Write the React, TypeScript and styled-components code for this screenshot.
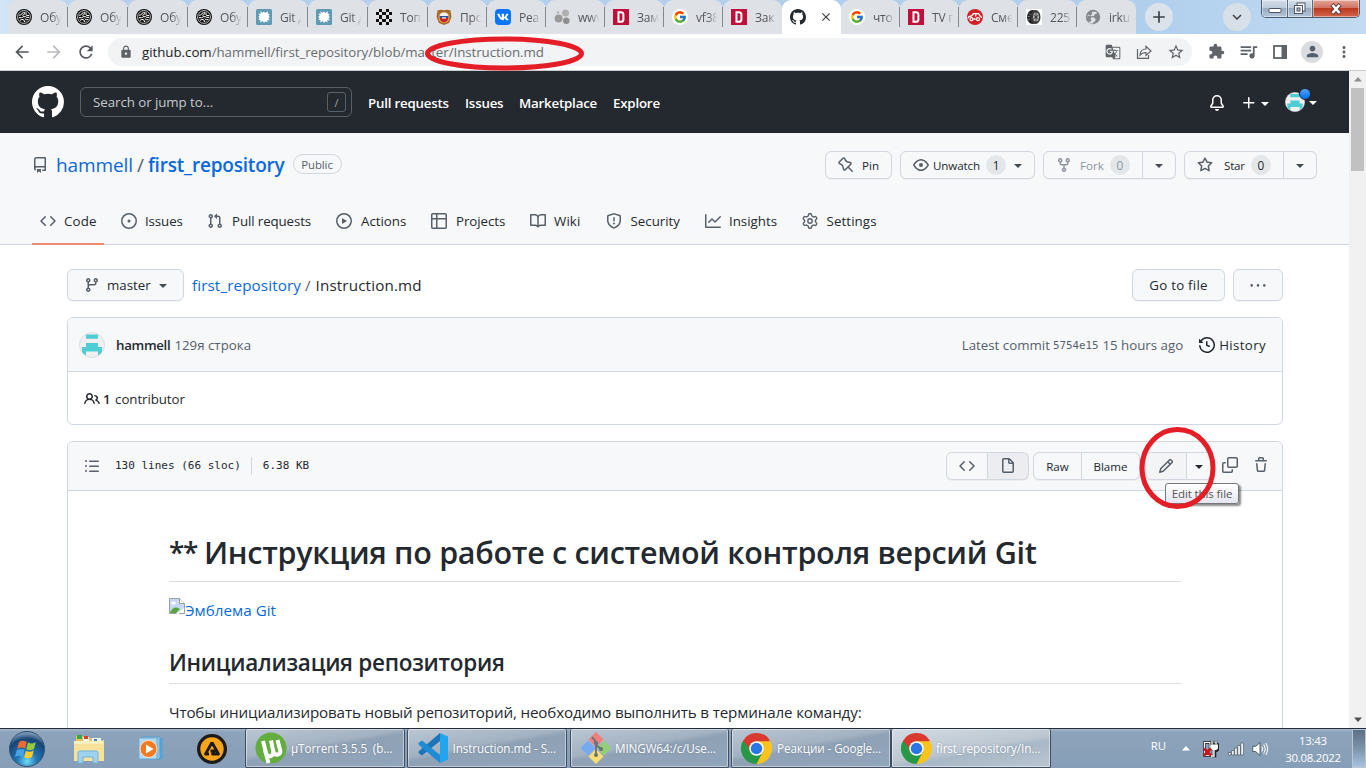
import React from "react";
import styled, { createGlobalStyle, css } from "styled-components";
import { FcGoogle } from "react-icons/fc";
import { FaVk } from "react-icons/fa";
import {
  MdArrowBack,
  MdArrowForward,
  MdRefresh,
  MdLock,
  MdStarBorder,
  MdExtension,
  MdQueueMusic,
  MdPerson,
  MdMoreVert,
  MdClose,
  MdAdd,
  MdExpandMore,
  MdGTranslate,
} from "react-icons/md";

const ui = `"Open Sans", "Noto Sans", sans-serif`;
const mono = `"DejaVu Sans Mono", monospace`;
const line = "#d0d7de";

const Global = createGlobalStyle`
  * { box-sizing: border-box; }
  body { margin: 0; overflow: hidden; font-family: ${ui}; background: #fff; }
  svg { display: block; flex: none; }
`;

/* ---------- shared ---------- */

const Screen = styled.div`
  position: relative;
  width: 1366px;
  height: 768px;
  display: flex;
  flex-direction: column;
  overflow: hidden;
  color: #24292f;
`;

type TextProps = {
  $size?: number;
  $weight?: number;
  $color?: string;
  $ls?: number;
  $mono?: boolean;
  $ml?: number;
  $drop?: number;
};
const Text = styled.span<TextProps>`
  white-space: pre;
  font-family: ${(p) => (p.$mono ? mono : ui)};
  font-size: ${(p) => p.$size ?? 13.3}px;
  font-weight: ${(p) => p.$weight ?? 400};
  color: ${(p) => p.$color ?? "#24292f"};
  letter-spacing: ${(p) => p.$ls ?? 0}px;
  margin-left: ${(p) => p.$ml ?? 0}px;
  margin-top: ${(p) => p.$drop ?? 0}px;
`;

const paths = {
  github:
    "M8 0C3.58 0 0 3.58 0 8c0 3.54 2.29 6.53 5.47 7.59.4.07.55-.17.55-.38 0-.19-.01-.82-.01-1.49-2.01.37-2.53-.49-2.69-.94-.09-.23-.48-.94-.82-1.13-.28-.15-.68-.52-.01-.53.63-.01 1.08.58 1.23.82.72 1.21 1.87.87 2.33.66.07-.52.28-.87.51-1.07-1.78-.2-3.64-.89-3.64-3.95 0-.87.31-1.59.82-2.15-.08-.2-.36-1.02.08-2.12 0 0 .67-.21 2.2.82.64-.18 1.32-.27 2-.27.68 0 1.36.09 2 .27 1.53-1.04 2.2-.82 2.2-.82.44 1.1.16 1.92.08 2.12.51.56.82 1.27.82 2.15 0 3.07-1.87 3.75-3.65 3.95.29.25.54.73.54 1.48 0 1.07-.01 1.93-.01 2.2 0 .21.15.46.55.38A8.013 8.013 0 0016 8c0-4.42-3.58-8-8-8z",
  repo: "M2 2.5A2.5 2.5 0 014.5 0h8.75a.75.75 0 01.75.75v12.5a.75.75 0 01-.75.75h-2.5a.75.75 0 110-1.5h1.75v-2h-8a1 1 0 00-.714 1.7.75.75 0 01-1.072 1.05A2.495 2.495 0 012 11.5v-9zm10.5-1V9h-8c-.356 0-.694.074-1 .208V2.5a1 1 0 011-1h8zM5 12.25v3.25a.25.25 0 00.4.2l1.45-1.087a.25.25 0 01.3 0L8.6 15.7a.25.25 0 00.4-.2v-3.25a.25.25 0 00-.25-.25h-3.5a.25.25 0 00-.25.25z",
  code: "M4.72 3.22a.75.75 0 011.06 1.06L2.06 8l3.72 3.72a.75.75 0 11-1.06 1.06L.47 8.53a.75.75 0 010-1.06l4.25-4.25zm6.56 0a.75.75 0 10-1.06 1.06L13.94 8l-3.72 3.72a.75.75 0 101.06 1.06l4.25-4.25a.75.75 0 000-1.06l-4.25-4.25z",
  issue:
    "M8 9.5a1.5 1.5 0 100-3 1.5 1.5 0 000 3zM8 0a8 8 0 100 16A8 8 0 008 0zM1.5 8a6.5 6.5 0 1113 0 6.5 6.5 0 01-13 0z",
  pull: "M7.177 3.073L9.573.677A.25.25 0 0110 .854v4.792a.25.25 0 01-.427.177L7.177 3.427a.25.25 0 010-.354zM3.75 2.5a.75.75 0 100 1.5.75.75 0 000-1.5zm-2.25.75a2.25 2.25 0 113 2.122v5.256a2.251 2.251 0 11-1.5 0V5.372A2.25 2.25 0 011.5 3.25zM11 2.5h-1V4h1a1 1 0 011 1v5.628a2.251 2.251 0 101.5 0V5A2.5 2.5 0 0011 2.5zm1 10.25a.75.75 0 111.5 0 .75.75 0 01-1.5 0zM3.75 12a.75.75 0 100 1.5.75.75 0 000-1.5z",
  play: "M1.5 8a6.5 6.5 0 1113 0 6.5 6.5 0 01-13 0zM8 0a8 8 0 100 16A8 8 0 008 0zM6.379 5.227A.25.25 0 006 5.442v5.117a.25.25 0 00.379.214l4.264-2.559a.25.25 0 000-.428L6.379 5.227z",
  table:
    "M0 1.75C0 .784.784 0 1.75 0h12.5C15.216 0 16 .784 16 1.75v12.5A1.75 1.75 0 0114.25 16H1.75A1.75 1.75 0 010 14.25V1.75zM1.5 6.5v7.75c0 .138.112.25.25.25H5v-8H1.5zM5 5H1.5V1.75a.25.25 0 01.25-.25H5V5zm1.5 1.5v8h7.75a.25.25 0 00.25-.25V6.5h-8zm8-1.5h-8V1.5h7.75a.25.25 0 01.25.25V5z",
  book: "M0 1.75A.75.75 0 01.75 1h4.253c1.227 0 2.317.59 3 1.501A3.744 3.744 0 0111.006 1h4.245a.75.75 0 01.75.75v10.5a.75.75 0 01-.75.75h-4.507a2.25 2.25 0 00-1.591.659l-.622.621a.75.75 0 01-1.06 0l-.622-.621A2.25 2.25 0 005.258 13H.75a.75.75 0 01-.75-.75V1.75zm8.755 3a2.25 2.25 0 012.25-2.25H14.5v9h-3.757c-.71 0-1.4.201-1.992.572l.004-7.322zm-1.504 7.324l.004-5.073-.002-2.253A2.25 2.25 0 005.003 2.5H1.5v9h3.757a3.75 3.75 0 011.994.574z",
  shield:
    "M7.467.133a1.75 1.75 0 011.066 0l5.25 1.68A1.75 1.75 0 0115 3.48V7c0 1.566-.32 3.182-1.303 4.682-.983 1.498-2.585 2.813-5.032 3.855a1.7 1.7 0 01-1.33 0c-2.447-1.042-4.049-2.357-5.032-3.855C1.32 10.182 1 8.566 1 7V3.48a1.75 1.75 0 011.217-1.667l5.25-1.68zm.61 1.429a.25.25 0 00-.153 0l-5.25 1.68a.25.25 0 00-.174.238V7c0 1.358.275 2.666 1.057 3.86.784 1.194 2.121 2.34 4.366 3.297a.2.2 0 00.154 0c2.245-.956 3.582-2.104 4.366-3.298C13.225 9.666 13.5 8.36 13.5 7V3.48a.25.25 0 00-.174-.237l-5.25-1.68zM9 10.5a1 1 0 11-2 0 1 1 0 012 0zm-.25-5.75a.75.75 0 10-1.5 0v3a.75.75 0 001.5 0v-3z",
  graph:
    "M1.5 1.75a.75.75 0 00-1.5 0v12.5c0 .414.336.75.75.75h14.5a.75.75 0 000-1.5H1.5V1.75zm14.28 2.53a.75.75 0 00-1.06-1.06L10 7.94 7.53 5.47a.75.75 0 00-1.06 0L3.22 8.72a.75.75 0 001.06 1.06L7 7.06l2.47 2.47a.75.75 0 001.06 0l5.25-5.25z",
  pin: "M4.456.734a1.75 1.75 0 012.826.504l.613 1.327a3.081 3.081 0 002.084 1.707l2.454.584c1.332.317 1.8 1.972.832 2.94L11.06 10l3.72 3.72a.75.75 0 11-1.061 1.06L10 11.06l-2.204 2.205c-.968.968-2.623.5-2.94-.832l-.584-2.454a3.081 3.081 0 00-1.707-2.084l-1.327-.613a1.75 1.75 0 01-.504-2.826L4.456.734zM5.92 1.866a.25.25 0 00-.404-.072L1.794 5.516a.25.25 0 00.072.404l1.328.613A4.582 4.582 0 015.73 9.63l.584 2.454a.25.25 0 00.42.12l5.47-5.47a.25.25 0 00-.12-.42L9.63 5.73a4.581 4.581 0 01-3.098-2.537L5.92 1.866z",
  eye: "M1.679 7.932c.412-.621 1.242-1.75 2.366-2.717C5.175 4.242 6.527 3.5 8 3.5c1.473 0 2.824.742 3.955 1.715 1.124.967 1.954 2.096 2.366 2.717a.119.119 0 010 .136c-.412.621-1.242 1.75-2.366 2.717C10.825 11.758 9.473 12.5 8 12.5c-1.473 0-2.824-.742-3.955-1.715C2.92 9.818 2.09 8.69 1.679 8.068a.119.119 0 010-.136zM8 2c-1.981 0-3.67.992-4.933 2.078C1.797 5.169.88 6.423.43 7.1a1.619 1.619 0 000 1.798c.45.678 1.367 1.932 2.637 3.024C4.329 13.008 6.019 14 8 14c1.981 0 3.67-.992 4.933-2.078 1.27-1.091 2.187-2.345 2.637-3.023a1.619 1.619 0 000-1.798c-.45-.678-1.367-1.932-2.637-3.023C11.671 2.992 9.981 2 8 2zm0 8a2 2 0 100-4 2 2 0 000 4z",
  fork: "M5 3.25a.75.75 0 11-1.5 0 .75.75 0 011.5 0zm0 2.122a2.25 2.25 0 10-1.5 0v.878A2.25 2.25 0 005.75 8.5h1.5v2.128a2.251 2.251 0 101.5 0V8.5h1.5a2.25 2.25 0 002.25-2.25v-.878a2.25 2.25 0 10-1.5 0v.878a.75.75 0 01-.75.75h-4.5A.75.75 0 015 6.25v-.878zm3.75 7.378a.75.75 0 11-1.5 0 .75.75 0 011.5 0zm3-8.75a.75.75 0 100-1.5.75.75 0 000 1.5z",
  star: "M8 .25a.75.75 0 01.673.418l1.882 3.815 4.21.612a.75.75 0 01.416 1.279l-3.046 2.97.719 4.192a.75.75 0 01-1.088.791L8 12.347l-3.766 1.98a.75.75 0 01-1.088-.79l.72-4.194L.818 6.374a.75.75 0 01.416-1.28l4.21-.611L7.327.668A.75.75 0 018 .25zm0 2.445L6.615 5.5a.75.75 0 01-.564.41l-3.097.45 2.24 2.184a.75.75 0 01.216.664l-.528 3.084 2.769-1.456a.75.75 0 01.698 0l2.77 1.456-.53-3.084a.75.75 0 01.216-.664l2.24-2.183-3.096-.45a.75.75 0 01-.564-.41L8 2.694v.001z",
  branch:
    "M11.75 2.5a.75.75 0 100 1.5.75.75 0 000-1.5zm-2.25.75a2.25 2.25 0 113 2.122V6A2.5 2.5 0 0110 8.5H6a1 1 0 00-1 1v1.128a2.251 2.251 0 11-1.5 0V5.372a2.25 2.25 0 111.5 0v1.836A2.492 2.492 0 016 7h4a1 1 0 001-1v-.628A2.25 2.25 0 019.5 3.25zM4.25 12a.75.75 0 100 1.5.75.75 0 000-1.5zM3.5 3.25a.75.75 0 111.5 0 .75.75 0 01-1.5 0z",
  people:
    "M5.5 3.5a2 2 0 100 4 2 2 0 000-4zM2 5.5a3.5 3.5 0 115.898 2.549 5.507 5.507 0 013.034 4.084.75.75 0 11-1.482.235 4.001 4.001 0 00-7.9 0 .75.75 0 01-1.482-.236A5.507 5.507 0 013.102 8.05 3.49 3.49 0 012 5.5zM11 4a.75.75 0 100 1.5 1.5 1.5 0 01.666 2.844.75.75 0 00-.416.672v.352a.75.75 0 00.574.73c1.2.289 2.162 1.2 2.522 2.372a.75.75 0 101.434-.44 5.01 5.01 0 00-2.56-3.012A3 3 0 0011 4z",
  history:
    "M1.643 3.143L.427 1.927A.25.25 0 000 2.104V5.75c0 .138.112.25.25.25h3.646a.25.25 0 00.177-.427L2.715 4.215a6.5 6.5 0 11-1.18 4.458.75.75 0 10-1.493.154 8.001 8.001 0 101.6-5.684zM7.75 4a.75.75 0 01.75.75v2.992l2.028.812a.75.75 0 01-.557 1.392l-2.5-1A.75.75 0 017 8.25v-3.5A.75.75 0 017.75 4z",
  bell: "M8 16a2 2 0 001.985-1.75c.017-.137-.097-.25-.235-.25h-3.5c-.138 0-.252.113-.235.25A2 2 0 008 16zM3 5a5 5 0 0110 0v2.947c0 .05.015.098.042.139l1.703 2.555A1.518 1.518 0 0113.482 13H2.518a1.518 1.518 0 01-1.263-2.36l1.703-2.554A.25.25 0 003 7.947V5zm5-3.5A3.5 3.5 0 004.5 5v2.947c0 .346-.102.683-.294.97l-1.703 2.556a.018.018 0 00-.003.01l.001.006c0 .002.002.004.004.006a.017.017 0 00.006.004l.007.001h10.964l.007-.001a.016.016 0 00.006-.004.016.016 0 00.004-.006l.001-.007a.017.017 0 00-.003-.01l-1.703-2.554a1.75 1.75 0 01-.294-.97V5A3.5 3.5 0 008 1.5z",
  plus: "M7.75 2a.75.75 0 01.75.75V7h4.25a.75.75 0 110 1.5H8.5v4.25a.75.75 0 11-1.5 0V8.5H2.75a.75.75 0 010-1.5H7V2.75A.75.75 0 017.75 2z",
  list: "M2 4a1 1 0 100-2 1 1 0 000 2zm3.75-1.5a.75.75 0 000 1.5h8.5a.75.75 0 000-1.5h-8.5zm0 5a.75.75 0 000 1.5h8.5a.75.75 0 000-1.5h-8.5zm0 5a.75.75 0 000 1.5h8.5a.75.75 0 000-1.5h-8.5zM3 8a1 1 0 11-2 0 1 1 0 012 0zm-1 6a1 1 0 100-2 1 1 0 000 2z",
  file: "M3.75 1.5a.25.25 0 00-.25.25v11.5c0 .138.112.25.25.25h8.5a.25.25 0 00.25-.25V6H9.75A1.75 1.75 0 018 4.25V1.5H3.75zm5.75.56v2.19c0 .138.112.25.25.25h2.19L9.5 2.06zM2 1.75C2 .784 2.784 0 3.75 0h5.086c.464 0 .909.184 1.237.513l3.414 3.414c.329.328.513.773.513 1.237v8.086A1.75 1.75 0 0112.25 15h-8.5A1.75 1.75 0 012 13.25V1.75z",
  pencil:
    "M11.013 1.427a1.75 1.75 0 012.474 0l1.086 1.086a1.75 1.75 0 010 2.474l-8.61 8.61c-.21.21-.47.364-.756.445l-3.251.93a.75.75 0 01-.927-.928l.929-3.25a1.75 1.75 0 01.445-.758l8.61-8.61zm1.414 1.06a.25.25 0 00-.354 0L10.811 3.75l1.439 1.44 1.263-1.263a.25.25 0 000-.354l-1.086-1.086zM11.189 6.25L9.75 4.81l-6.286 6.287a.25.25 0 00-.064.108l-.558 1.953 1.953-.558a.249.249 0 00.108-.064l6.286-6.286z",
  trash:
    "M6.5 1.75a.25.25 0 01.25-.25h2.5a.25.25 0 01.25.25V3h-3V1.75zm4.5 0V3h2.25a.75.75 0 010 1.5H2.75a.75.75 0 010-1.5H5V1.75C5 .784 5.784 0 6.75 0h2.5C10.216 0 11 .784 11 1.75zM4.496 6.675a.75.75 0 10-1.492.15l.66 6.6A1.75 1.75 0 005.405 15h5.19c.9 0 1.652-.681 1.741-1.576l.66-6.6a.75.75 0 00-1.492-.149l-.66 6.6a.25.25 0 01-.249.225h-5.19a.25.25 0 01-.249-.225l-.66-6.6z",
  dots: "M8 9.700a1.300 1.300 0 100-2.600 1.300 1.300 0 000 2.600zM1.700 9.700a1.300 1.300 0 100-2.600 1.300 1.300 0 000 2.600zm12.600 0a1.300 1.300 0 100-2.600 1.300 1.300 0 000 2.600z",
};

const Oct = ({ name, size = 16, color = "#57606a" }: { name: keyof typeof paths; size?: number; color?: string }) => (
  <svg width={size} height={size} viewBox="0 0 16 16" fill={color}>
    <path fillRule="evenodd" d={paths[name]} />
  </svg>
);

const Gear = () => (
  <svg width="16" height="16" viewBox="0 0 16 16" fill="none" stroke="#57606a" strokeWidth="1.4">
    <path d="M7.4 .8h1.2c.4 0 .7.3.8.7l.3 1.1c.1.4.4.6.7.8l.5.3c.3.2.7.3 1.1.2l1.1-.3c.4-.1.8 0 1 .4l.6 1c.2.4.1.8-.2 1.1l-.8.8c-.3.3-.4.6-.4 1v.2c0 .4.1.7.4 1l.8.8c.3.3.4.7.2 1.1l-.6 1c-.2.4-.6.5-1 .4l-1.1-.3c-.4-.1-.8 0-1.1.2l-.5.3c-.3.2-.6.4-.7.8l-.3 1.1c-.1.4-.4.7-.8.7H7.4c-.4 0-.7-.3-.8-.7l-.3-1.1c-.1-.4-.4-.6-.7-.8l-.5-.3c-.3-.2-.7-.3-1.1-.2l-1.1.3c-.4.1-.8 0-1-.4l-.6-1c-.2-.4-.1-.8.2-1.1l.8-.8c.3-.3.4-.6.4-1v-.2c0-.4-.1-.7-.4-1l-.8-.8c-.3-.3-.4-.7-.2-1.1l.6-1c.2-.4.6-.5 1-.4l1.1.3c.4.1.8 0 1.1-.2l.5-.3c.3-.2.6-.4.7-.8l.3-1.1c.1-.4.4-.7.8-.7z" />
    <circle cx="8" cy="8" r="2.2" />
  </svg>
);

const CopyIcon = () => (
  <svg width="16" height="16" viewBox="0 0 16 16" fill="none" stroke="#57606a" strokeWidth="1.5" strokeLinecap="round">
    <rect x="5.75" y=".75" width="9.5" height="9.5" rx="1" />
    <path d="M3.2 5.75H1.75a1 1 0 0 0-1 1v7.5a1 1 0 0 0 1 1h7.5a1 1 0 0 0 1-1V12.8" />
  </svg>
);

const Caret = styled.i<{ $color?: string; $ml?: number }>`
  width: 0;
  height: 0;
  border: 4px solid transparent;
  border-top-color: ${(p) => p.$color ?? "#424a53"};
  border-bottom: 0;
  margin-top: 2px;
  margin-left: ${(p) => p.$ml ?? 0}px;
`;

const Identicon = ({ size }: { size: number }) => (
  <svg width={size} height={size} viewBox="0 0 26 26">
    <defs>
      <clipPath id={"round" + size}>
        <circle cx="13" cy="13" r="12.5" />
      </clipPath>
    </defs>
    <g clipPath={`url(#round${size})`}>
      <rect width="26" height="26" fill="#f0f0f0" />
      <path fill="#4fcdd4" d="M7 2.5h12v4.2H7zM7 11h12v4h4v9h-4v-4.500H7v4.500H3v-9h4z" />
    </g>
    <circle cx="13" cy="13" r="12.500" fill="none" stroke="#d3d9de" strokeWidth=".8" />
  </svg>
);

/* ---------- browser tab strip ---------- */

const Strip = styled.div`
  height: 34px;
  flex: none;
  display: flex;
  padding-left: 8px;
  background: linear-gradient(90deg, #d3e6f6 0, #b3d0ee 90px, #b0cfed 1130px, #b8d4ef 1250px, #c3dbf2 1366px);
`;

const Tab = styled.div<{ $w: number; $active?: boolean; $line?: boolean }>`
  position: relative;
  width: ${(p) => p.$w}px;
  height: 34px;
  padding-left: 8px;
  display: flex;
  align-items: center;
  gap: 8px;
  border-radius: 9px 9px 0 0;
  background: ${(p) => (p.$active ? "#fff" : "#dee1e6")};
  ${(p) =>
    p.$line &&
    css`
      &::after {
        content: "";
        position: absolute;
        right: 0;
        top: 7px;
        width: 1px;
        height: 20px;
        background: #85898e;
      }
    `}
`;

const TabTitle = styled.span`
  width: 24px;
  overflow: hidden;
  white-space: pre;
  font-size: 12px;
  letter-spacing: -0.2px;
  color: #54585d;
  mask-image: linear-gradient(90deg, #000 50%, transparent 90%);
`;

const Circle = styled.div<{ $bg: string; $size: number; $ml?: number }>`
  width: ${(p) => p.$size}px;
  height: ${(p) => p.$size}px;
  margin-left: ${(p) => p.$ml ?? 0}px;
  border-radius: 50%;
  background: ${(p) => p.$bg};
  display: grid;
  place-items: center;
  align-self: center;
  flex: none;
`;

const WindowButtons = styled.div`
  display: flex;
  width: 99px;
  height: 18px;
  margin-left: 10px;
  border: 1px solid #4b5b70;
  border-top: 0;
  border-radius: 0 0 5px 5px;
  overflow: hidden;
`;

const WindowButton = styled.div<{ $w: number; $close?: boolean }>`
  width: ${(p) => p.$w}px;
  display: grid;
  place-items: center;
  box-shadow: inset 0 0 0 1px rgba(255, 255, 255, 0.45);
  border-right: ${(p) => (p.$close ? "0" : "1px solid #5b6b80")};
  background: ${(p) =>
    p.$close
      ? "linear-gradient(#e3a698 0, #d27562 45%, #bc3a20 50%, #d4664a 100%)"
      : "linear-gradient(#d2dde9 0, #bccbdb 45%, #98abc1 50%, #b5c6d9 100%)"};
`;

const MazeIcon = () => (
  <svg width="16" height="16" viewBox="0 0 16 16" fill="none" stroke="#fff">
    <circle cx="8" cy="8" r="8" fill="#111" stroke="none" />
    <circle cx="8" cy="8" r="6.400" strokeWidth=".7" />
    <path
      d="M3 6.200q2 .3 2.500-1t2-1.700M8.300 3v2q-.3 1.300-2 1.300M10 3.300v2.200q0 1 1 1h2M3 8.700h2.500q1.500 0 1.500-1h2.500q1 1 3.500.700M4 11.300q1.500-1 3-.800t1.500 2.500M9 9.500q.300 1.200 1.500 1.200h2M10 12.500l-.300.500"
      strokeWidth="1"
    />
  </svg>
);

const SplatIcon = () => (
  <svg width="16" height="16" viewBox="0 0 16 16">
    <rect width="16" height="16" rx="1.500" fill="#5f9ab5" />
    <path
      fill="#fff"
      d="M4.500 2l1.700 1.800L8 2.500l1.200 1.600L12 2.200l-.3 2.500 2 .3-1.200 1.700 1.500 1.500-1.700.900 1.500 2.400-2.500-.400.2 2.500-2-1.300L8 13.900 6.800 12l-2.700 1.600.4-2.600-2.200.1 1.300-1.900-1.500-1.400 1.700-.9L2.300 4.500 4.700 5z"
    />
  </svg>
);

const ChessIcon = () => (
  <svg width="16" height="16" viewBox="0 0 16 16" fill="#111" shapeRendering="crispEdges">
    {[0, 1, 2, 3, 4].flatMap((r) =>
      [0, 1, 2, 3, 4]
        .filter((c) => (r + c) % 2 === 1)
        .map((c) => <rect key={`${r}${c}`} x={c * 3.2} y={r * 3.2} width="3.2" height="3.2" />)
    )}
  </svg>
);

const CrestIcon = () => (
  <svg width="16" height="16" viewBox="0 0 16 16">
    <path d="M1.500 1.500Q5 0 8 1.200 11 0 14.500 1.500L15.500 8 13 14 8 16 3 14 .5 8z" fill="#a9682b" />
    <circle cx="8" cy="8.500" r="5.600" fill="#d9a14a" />
    <path d="M3.800 7a4.200 3.600 0 0 1 8.400 0z" fill="#eef0f5" />
    <path d="M3.700 7h8.600v2H3.700z" fill="#2d4fa0" />
    <path d="M3.800 9h8.400a4.200 4.200 0 0 1-8.400 0z" fill="#c8242a" />
    <path d="M6 8.200h4v1.400H6z" fill="#efe6da" />
  </svg>
);

const GlobeIcon = () => (
  <svg width="16" height="16" viewBox="0 0 16 16">
    <circle cx="8" cy="8" r="7.200" fill="#84878b" />
    <path
      d="M6.800 2.800h4.400l.8 1.800-2.200.6-.6 1.600-2.600.4-.4 1.400h3l1.600 1.800-1 2-1.600 1-.4 1.200q-2 0-3.400-1.200V11L2.400 8.500q0-2 .8-3l2 1 2-1.300z"
      fill="#dee1e6"
    />
    <path d="M2.600 7l2.800-.5 1.200 1-1 2 .8 1.700-.8 1.500Q2.500 11.500 2.600 7z" fill="#84878b" />
  </svg>
);

const VkBox = styled.div`
  width: 16px;
  height: 16px;
  border-radius: 4px;
  background: #0a76ff;
  display: grid;
  place-items: center;
  color: #fff;
`;

const WhiteRound = styled.div`
  width: 16px;
  height: 16px;
  border-radius: 50%;
  background: #fff;
  display: grid;
  place-items: center;
`;

const DIcon = () => (
  <svg width="16" height="16" viewBox="0 0 16 16">
    <rect width="16" height="16" fill="#c0103a" />
    <path d="M5.500 3.200h2.300q2.600 0 2.600 2.400v4.800q0 2.400-2.600 2.400H5.500z" fill="none" stroke="#fff" strokeWidth="2" />
  </svg>
);

const BubblesIcon = () => (
  <svg width="16" height="16" viewBox="0 0 16 16" fill="#9a9a9a">
    <circle cx="4.600" cy="9.600" r="4" />
    <circle cx="11.500" cy="4" r="3.500" fill="#b0b0b0" />
    <circle cx="12.300" cy="11.800" r="3.200" fill="#8d8d8d" />
    <circle cx="4" cy="3.500" r="1.300" fill="#b5b5b5" />
  </svg>
);

const CarIcon = () => (
  <svg width="16" height="16" viewBox="0 0 16 16">
    <circle cx="8" cy="8" r="8" fill="#cf2128" />
    <path
      d="M.8 9.500L2 7.500l2.500-.5L6.500 4.700h5L13.500 7.500l1.600 1M8.700 5v2.500M6.300 10h2.500"
      stroke="#fff"
      strokeWidth="1.300"
      fill="none"
    />
    <circle cx="4.500" cy="10.200" r="1.500" fill="none" stroke="#fff" strokeWidth="1.200" />
    <circle cx="11" cy="10.200" r="1.500" fill="none" stroke="#fff" strokeWidth="1.200" />
  </svg>
);

const TyreIcon = () => (
  <svg width="16" height="16" viewBox="0 0 16 16">
    <rect width="16" height="16" fill="#fff" />
    <ellipse cx="6.500" cy="8" rx="5.500" ry="7" fill="#222" />
    <ellipse cx="9.500" cy="8" rx="5" ry="7" fill="#3a3a3a" />
    <ellipse cx="10" cy="8" rx="3" ry="4.500" fill="#b9b9b9" />
    <path d="M10 3.500v9M7.500 6l5 4M7.500 10l5-4" stroke="#333" strokeWidth="1" />
    <path d="M2.500 4.500l2 1M1.500 7.500h2.500M2 11l2-1" stroke="#999" strokeWidth=".7" />
  </svg>
);

const G = () => (
  <WhiteRound>
    <FcGoogle size={14} />
  </WhiteRound>
);

const tabs: { icon: React.ReactNode; title: string; w: number; line: boolean }[] = [
  { icon: <MazeIcon />, title: "Обу", w: 60, line: true },
  { icon: <MazeIcon />, title: "Обу", w: 60, line: true },
  { icon: <MazeIcon />, title: "Обу", w: 60, line: true },
  { icon: <MazeIcon />, title: "Обу", w: 60, line: true },
  { icon: <SplatIcon />, title: "Git Д", w: 60, line: true },
  { icon: <SplatIcon />, title: "Git Д", w: 60, line: true },
  { icon: <ChessIcon />, title: "Топ", w: 60, line: true },
  { icon: <CrestIcon />, title: "Про", w: 59, line: true },
  { icon: <VkBox><FaVk size={12} /></VkBox>, title: "Реа", w: 59, line: true },
  { icon: <BubblesIcon />, title: "www", w: 59, line: true },
  { icon: <DIcon />, title: "Зам", w: 59, line: true },
  { icon: <G />, title: "vf38", w: 59, line: true },
  { icon: <DIcon />, title: "Зак", w: 59, line: false },
];

const tabsAfter: typeof tabs = [
  { icon: <G />, title: "что", w: 59, line: true },
  { icon: <DIcon />, title: "TV п", w: 59, line: true },
  { icon: <CarIcon />, title: "Сме", w: 59, line: true },
  { icon: <TyreIcon />, title: "225", w: 59, line: true },
  { icon: <GlobeIcon />, title: "irku", w: 59, line: false },
];

const TabList = ({ items }: { items: typeof tabs }) => (
  <>
    {items.map((t, i) => (
      <Tab key={i} $w={t.w} $line={t.line}>
        {t.icon}
        <TabTitle>{t.title}</TabTitle>
      </Tab>
    ))}
  </>
);

const TabStrip = () => (
  <Strip>
    <TabList items={tabs} />
    <Tab $w={59} $active>
      <Oct name="github" color="#24292f" />
      <Text $ml={5}>
        <MdClose size={14} color="#3c4043" />
      </Text>
    </Tab>
    <TabList items={tabsAfter} />
    <Circle $bg="#dbe2ea" $size={28} $ml={9}>
      <MdAdd size={20} color="#3c4043" />
    </Circle>
    <Circle $bg="#d7dfe9" $size={28} $ml={50}>
      <MdExpandMore size={18} color="#3c4043" />
    </Circle>
    <WindowButtons>
      <WindowButton $w={26}>
        <svg width="14" height="17" viewBox="0 0 14 17">
          <rect x="1" y="8.500" width="12" height="4" rx="1" fill="#fff" stroke="#4b5565" />
        </svg>
      </WindowButton>
      <WindowButton $w={25}>
        <svg width="14" height="15" viewBox="0 0 14 15" fill="#fff" stroke="#4b5565">
          <rect x="4" y="2" width="8" height="8" />
          <rect x="1.500" y="4.500" width="8" height="8" />
          <rect x="4" y="7" width="3" height="3" fill="#b5c3d3" />
        </svg>
      </WindowButton>
      <WindowButton $w={46} $close>
        <svg width="12" height="12" viewBox="0 0 12 12" fill="none">
          <path d="M2 1.500l8 9M10 1.500l-8 9" stroke="#5a3a3e" strokeWidth="4.400" />
          <path d="M2.500 2l7 8M9.500 2l-7 8" stroke="#fff" strokeWidth="2.600" />
        </svg>
      </WindowButton>
    </WindowButtons>
  </Strip>
);

/* ---------- address bar ---------- */

const Toolbar = styled.div`
  height: 37px;
  flex: none;
  display: flex;
  align-items: center;
  padding: 0 12px 1px 12px;
  background: #fff;
  border-bottom: 1px solid #c9ccd1;
`;

const NavIcons = styled.div`
  display: flex;
  gap: 12px;
  width: 96px;
`;

const Omnibox = styled.div`
  width: 1084px;
  height: 28px;
  border-radius: 14px;
  background: #f1f3f4;
  display: flex;
  align-items: center;
  padding: 0 7px 0 11px;
`;

const OmniIcons = styled.div`
  display: flex;
  margin-left: auto;
  gap: 15px;
  align-items: center;
`;

const ToolIcons = styled.div`
  display: flex;
  align-items: center;
  margin-left: 15px;
`;

const Slot = styled.div<{ $w: number }>`
  width: ${(p) => p.$w}px;
  display: grid;
  place-items: center;
`;

const AddressBar = () => (
  <Toolbar>
    <NavIcons>
      <MdArrowBack size={20} color="#55585d" />
      <MdArrowForward size={20} color="#b9bbbe" />
      <MdRefresh size={20} color="#55585d" />
    </NavIcons>
    <Omnibox>
      <MdLock size={14} color="#5f6368" />
      <Text $ml={9} $size={13.3} $color="#202124" $ls={-0.03}>github.com</Text>
      <Text $size={13.3} $color="#696d72" $ls={-0.05}>/hammell/first_repository/blob/master/Instruction.md</Text>
      <OmniIcons>
        <MdGTranslate size={16} color="#5f6368" />
        <svg width="16" height="16" viewBox="0 0 16 16" fill="none" stroke="#5f6368" strokeWidth="1.200">
          <path d="M1.500 5v9.400h11V11" />
          <path d="M4 11c.3-4 2.500-6 6-6V2.300L15 7l-5 4.500V8.700C7.500 8.500 5.500 9.200 4 11z" />
        </svg>
        <MdStarBorder size={18} color="#5f6368" />
      </OmniIcons>
    </Omnibox>
    <ToolIcons>
      <Slot $w={18}><MdExtension size={17} color="#5f6368" /></Slot>
      <Slot $w={46}><MdQueueMusic size={21} color="#5f6368" /></Slot>
      <Slot $w={18}>
        <svg width="14" height="14" viewBox="0 0 14 14">
          <rect x="1" y="1" width="12" height="12" fill="none" stroke="#5f6368" strokeWidth="1.800" />
          <rect x="8.500" y="0" width="5.500" height="14" fill="#5f6368" />
        </svg>
      </Slot>
      <Slot $w={46}>
        <Circle $bg="#dadce0" $size={22}>
          <MdPerson size={17} color="#55606e" />
        </Circle>
      </Slot>
      <Slot $w={18}><MdMoreVert size={18} color="#5f6368" /></Slot>
    </ToolIcons>
  </Toolbar>
);

/* ---------- GitHub page ---------- */

const Viewport = styled.div`
  flex: 1;
  min-height: 0;
  display: flex;
`;

const Page = styled.div`
  width: 1349px;
  overflow: hidden;
  background: #fff;
`;

const SiteHeader = styled.header`
  height: 62px;
  padding: 0 32px;
  display: flex;
  align-items: center;
  background: #24292f;
`;

const SearchBox = styled.div`
  width: 272px;
  height: 30px;
  margin-left: 16px;
  padding: 0 5px 0 12px;
  border: 1px solid #57606a;
  border-radius: 6px;
  display: flex;
  align-items: center;
  justify-content: space-between;
`;

const SlashKey = styled.div`
  width: 19px;
  height: 20px;
  border: 1px solid #57606a;
  border-radius: 3px;
  display: grid;
  place-items: center;
  font-size: 11px;
  color: #9aa1a8;
`;

const HeaderLink = styled.a<{ $w: number }>`
  width: ${(p) => p.$w}px;
  white-space: nowrap;
  font-size: 13.3px;
  font-weight: 600;
  letter-spacing: -0.2px;
  color: #fff;
`;

const HeaderLinks = styled.nav`
  display: flex;
  margin: 2px 1px 0 16px;
  flex: 1;
`;

const HeaderIcons = styled.div`
  display: flex;
  align-items: center;
  margin: 2px -1px 0 0;
`;

const AvatarWrap = styled.div`
  position: relative;
  margin-left: 17px;
`;

const StatusDot = styled.i`
  position: absolute;
  right: -6px;
  top: -4px;
  width: 12px;
  height: 12px;
  border: 1px solid #24292f;
  border-radius: 50%;
  background: linear-gradient(#54a3ff, #006eed);
`;

const RepoHead = styled.section`
  height: 112px;
  background: #f6f8fa;
  border-bottom: 1px solid ${line};
  display: flex;
  flex-direction: column;
`;

const RepoTitleRow = styled.div`
  display: flex;
  align-items: center;
  height: 64px;
  padding: 0 32px;
`;

const Badge = styled.span`
  height: 20px;
  width: 49px;
  margin: -2px 0 0 8px;
  border: 1px solid ${line};
  border-radius: 10px;
  display: grid;
  place-items: center;
  font-size: 11.4px;
  font-weight: 500;
  letter-spacing: -0.1px;
  color: #57606a;
`;

const Actions = styled.div`
  display: flex;
  gap: 8px;
  margin-left: auto;
`;

const Btn = styled.button<{ $w: number; $h?: number; $tone?: string; $seg?: "l" | "r"; $bg?: string; $pad?: number }>`
  width: ${(p) => p.$w}px;
  height: ${(p) => p.$h ?? 28}px;
  padding: 0 ${(p) => p.$pad ?? 0}px;
  display: flex;
  align-items: center;
  justify-content: ${(p) => (p.$pad ? "flex-start" : "center")};
  background: ${(p) => p.$bg ?? "#f6f8fa"};
  border: 1px solid ${line};
  ${(p) => p.$seg === "r" && "border-left: 0;"}
  border-radius: ${(p) => (p.$seg === "l" ? "6px 0 0 6px" : p.$seg === "r" ? "0 6px 6px 0" : "6px")};
  box-shadow: 0 1px 0 rgba(27, 31, 36, 0.04);
  font-family: ${ui};
  color: ${(p) => p.$tone ?? "#24292f"};
  white-space: nowrap;
`;

const Group = styled.div<{ $ml?: number }>`
  display: flex;
  margin-left: ${(p) => p.$ml ?? 0}px;
`;

const Counter = styled.span<{ $color?: string }>`
  width: 20px;
  height: 20px;
  margin-left: 6px;
  border-radius: 10px;
  background: #e4e7ea;
  display: grid;
  place-items: center;
  font-size: 11.8px;
  font-weight: 500;
  color: ${(p) => p.$color ?? "#24292f"};
`;

const RepoNav = styled.nav`
  display: flex;
  padding-left: 32px;
  height: 47px;
`;

const RepoNavItem = styled.a<{ $w: number; $active?: boolean }>`
  position: relative;
  width: ${(p) => p.$w}px;
  display: flex;
  align-items: center;
  padding-left: 8px;
  padding-top: 1px;
  white-space: nowrap;
  ${(p) =>
    p.$active &&
    css`
      &::after {
        content: "";
        position: absolute;
        left: 0;
        bottom: -1px;
        width: 72px;
        height: 2px;
        background: #e98b78;
      }
    `}
`;

const Content = styled.main`
  padding: 24px 66px 0 67px;
`;

const FileNav = styled.div`
  display: flex;
  align-items: center;
  height: 32px;
  margin-bottom: 16px;
`;

const CommitBox = styled.section`
  height: 108px;
  border: 1px solid ${line};
  border-radius: 6px;
  overflow: hidden;
`;

const CommitHead = styled.div`
  height: 54px;
  padding: 0 16px 0 11px;
  display: flex;
  align-items: center;
  background: #f6f8fa;
  border-bottom: 1px solid ${line};
`;

const ContributorRow = styled.div`
  height: 54px;
  padding-left: 16px;
  display: flex;
  align-items: center;
`;

const FileBox = styled.section`
  height: 400px;
  margin-top: 16px;
  border: 1px solid ${line};
  border-radius: 6px;
  background: #fff;
`;

const FileHead = styled.div`
  height: 49px;
  padding: 0 13px 0 16px;
  display: flex;
  align-items: center;
  background: #f6f8fa;
  border-bottom: 1px solid ${line};
  border-radius: 6px 6px 0 0;
`;

const Divider = styled.i`
  width: 1px;
  height: 18px;
  margin: 0 11px 0 10px;
  background: ${line};
`;

const FileTools = styled.div`
  display: flex;
  align-items: center;
  margin-left: auto;
`;

const FileIcons = styled.div`
  display: flex;
  gap: 15px;
  margin-bottom: 3px;
`;

const EditGroup = styled.div`
  position: relative;
  display: flex;
  margin: 0 10px 0 5px;
`;

const Tooltip = styled.div`
  position: absolute;
  z-index: 2;
  left: 20px;
  top: 31px;
  width: 74px;
  height: 21px;
  border: 1px solid #767676;
  border-radius: 3px;
  background: linear-gradient(#fff, #e5e5f1);
  box-shadow: 2px 2px 2px rgba(0, 0, 0, 0.45);
  display: grid;
  place-items: center;
  white-space: nowrap;
  font-size: 11.5px;
  letter-spacing: -0.1px;
  line-height: 17px;
  padding-bottom: 1px;
  color: #575757;
`;

const Article = styled.article`
  padding: 35px 101px 0;
`;

const H1 = styled.h1`
  display: flex;
  margin: 0 0 14px;
  height: 56px;
  border-bottom: 1px solid #d8dee4;
  line-height: 52px;
  font-size: 30.500px;
  font-weight: 600;
  letter-spacing: -0.3px;
  white-space: nowrap;
`;

const Stars = styled.span`
  width: 35px;
  font-size: 28px;
  letter-spacing: -1.400px;
`;

const BrokenImage = styled.div`
  display: flex;
  height: 28px;
  padding-top: 2px;
  align-items: flex-start;
`;

const H2 = styled.h2`
  margin: 23px 0 0;
  height: 37px;
  border-bottom: 1px solid #d8dee4;
  line-height: 32px;
  font-size: 22.500px;
  font-weight: 600;
  letter-spacing: -0.28px;
  white-space: nowrap;
`;

const Para = styled.p`
  margin: 16px 0 0;
  line-height: 24px;
  font-size: 15.200px;
  letter-spacing: -0.15px;
  white-space: nowrap;
`;

const Scrollbar = styled.div`
  width: 17px;
  background: #f1f1f1;
  display: flex;
  flex-direction: column;
  align-items: center;
`;

const Thumb = styled.div`
  width: 13px;
  height: 83px;
  background: #c1c1c1;
`;

const ScrollArrow = styled.div<{ $down?: boolean }>`
  height: 17px;
  display: grid;
  place-items: center;
  margin-top: ${(p) => (p.$down ? "auto" : 0)};
  transform: ${(p) => (p.$down ? "rotate(180deg)" : "none")};
`;

/* icon, label, slot width, letter spacing, gap after the icon */
const nav: [React.ReactNode, string, number, number, number][] = [
  [<Oct name="code" />, "Code", 81, 0.2, 8],
  [<Oct name="issue" />, "Issues", 86, -0.1, 8],
  [<Oct name="pull" />, "Pull requests", 129, -0.1, 9],
  [<Oct name="play" />, "Actions", 95, 0, 9],
  [<Oct name="table" />, "Projects", 99, -0.05, 9],
  [<Oct name="book" />, "Wiki", 76, 0.1, 8],
  [<Oct name="shield" />, "Security", 99, 0, 8.5],
  [<Oct name="graph" />, "Insights", 97, 0, 8],
  [<Gear />, "Settings", 90, 0.1, 8.5],
];

const GitHubPage = () => (
  <Page>
    <SiteHeader>
      <Oct name="github" size={32} color="#fff" />
      <SearchBox>
        <Text $color="#c4c9ce" $ls={-0.05}>Search or jump to...</Text>
        <SlashKey>/</SlashKey>
      </SearchBox>
      <HeaderLinks>
        <HeaderLink $w={97}>Pull requests</HeaderLink>
        <HeaderLink $w={54}>Issues</HeaderLink>
        <HeaderLink $w={94}>Marketplace</HeaderLink>
        <HeaderLink $w={60}>Explore</HeaderLink>
      </HeaderLinks>
      <HeaderIcons>
        <Oct name="bell" color="#fff" />
        <Text $ml={16}><Oct name="plus" color="#fff" /></Text>
        <Caret $color="#fff" $ml={4} />
      </HeaderIcons>
      <AvatarWrap>
        <Identicon size={20} />
        <StatusDot />
      </AvatarWrap>
      <Caret $color="#fff" $ml={4} />
    </SiteHeader>

    <RepoHead>
      <RepoTitleRow>
        <Oct name="repo" />
        <Text $size={19} $color="#0969da" $ml={8} $ls={-0.1}>hammell</Text>
        <Text $size={19} $color="#57606a" $ml={4}>/</Text>
        <Text $size={19} $color="#0969da" $ml={4} $weight={600} $ls={-0.2}>first_repository</Text>
        <Badge>Public</Badge>
        <Actions>
          <Btn $w={67} $pad={12}>
            <Oct name="pin" />
            <Text $size={11.6} $weight={500} $ml={8}>Pin</Text>
          </Btn>
          <Btn $w={135} $pad={12}>
            <Oct name="eye" />
            <Text $size={11.6} $weight={500} $ml={4} $ls={-0.1}>Unwatch</Text>
            <Counter>1</Counter>
            <Caret $ml={8} />
          </Btn>
          <Group>
            <Btn $w={100} $seg="l" $pad={12}>
              <Oct name="fork" color="#8c959f" />
              <Text $size={11.6} $weight={500} $ml={8} $color="#8c959f">Fork</Text>
              <Counter $color="#8c959f">0</Counter>
            </Btn>
            <Btn $w={33} $seg="r"><Caret /></Btn>
          </Group>
          <Group>
            <Btn $w={100} $seg="l" $pad={12}>
              <Oct name="star" />
              <Text $size={11.6} $weight={500} $ml={11} $ls={-0.2}>Star</Text>
              <Counter>0</Counter>
            </Btn>
            <Btn $w={33} $seg="r"><Caret /></Btn>
          </Group>
        </Actions>
      </RepoTitleRow>
      <RepoNav>
        {nav.map(([icon, label, w, ls, gap], i) => (
          <RepoNavItem key={label} $w={w} $active={i === 0}>
            {icon}
            <Text $weight={i === 0 ? 500 : 400} $ls={ls} $ml={gap}>{label}</Text>
          </RepoNavItem>
        ))}
      </RepoNav>
    </RepoHead>

    <Content>
      <FileNav>
        <Btn $w={117} $h={32} $pad={16}>
          <Oct name="branch" />
          <Text $ml={7} $weight={500}>master</Text>
          <Caret $ml={8} />
        </Btn>
        <Text $size={15.2} $ml={8} $color="#0969da" $ls={0.12}>first_repository</Text>
        <Text $size={15.2} $ml={4} $color="#57606a">/</Text>
        <Text $size={15.2} $ml={5} $weight={500} $ls={0.15}>Instruction.md</Text>
        <Actions>
          <Btn $w={93} $h={32}><Text $weight={500} $ls={0.25}>Go to file</Text></Btn>
          <Btn $w={50} $h={32}><Oct name="dots" size={16} /></Btn>
        </Actions>
      </FileNav>

      <CommitBox>
        <CommitHead>
          <Identicon size={26} />
          <Text $ml={11} $weight={600} $ls={-0.32}>hammell</Text>
          <Text $ml={4} $color="#57606a">129я строка</Text>
          <FileTools>
            <Text $color="#57606a">Latest commit</Text>
            <Text $color="#57606a" $mono $size={10.8} $ml={3} $drop={2}>5754e15</Text>
            <Text $color="#57606a" $ml={4}>15 hours ago</Text>
            <Text $ml={16}><Oct name="history" color="#24292f" /></Text>
            <Text $ml={4} $weight={500} $ls={0.35}>History</Text>
          </FileTools>
        </CommitHead>
        <ContributorRow>
          <Oct name="people" color="#24292f" />
          <Text $ml={3} $weight={600}>1</Text>
          <Text $ml={4.5} $ls={-0.08}>contributor</Text>
        </ContributorRow>
      </CommitBox>

      <FileBox>
        <FileHead>
          <Oct name="list" />
          <Text $mono $size={11} $ml={15} $drop={-2}>130 lines (66 sloc)</Text>
          <Divider />
          <Text $mono $size={11} $drop={-2}>6.38 KB</Text>
          <FileTools>
            <Btn $w={42} $seg="l"><Oct name="code" /></Btn>
            <Btn $w={41} $seg="r" $bg="#ebedf1"><Oct name="file" /></Btn>
            <Group $ml={4}>
              <Btn $w={49} $seg="l"><Text $size={11.6} $weight={500}>Raw</Text></Btn>
              <Btn $w={58} $seg="r"><Text $size={11.6} $weight={500}>Blame</Text></Btn>
            </Group>
            <EditGroup>
              <Btn $w={42} $seg="l" $bg="#f3f4f6"><Oct name="pencil" /></Btn>
              <Btn $w={25} $seg="r"><Caret $color="#24292f" /></Btn>
              <Tooltip>Edit this file</Tooltip>
            </EditGroup>
            <FileIcons>
              <CopyIcon />
              <Oct name="trash" />
            </FileIcons>
          </FileTools>
        </FileHead>
        <Article>
          <H1>
            <Stars>**</Stars>
            <span>Инструкция по работе с системой контроля версий Git</span>
          </H1>
          <BrokenImage>
            <svg width="16" height="16" viewBox="0 0 16 16">
              <path d="M.5.500h10l5 5v5L11 15.500H.5z" fill="#c6d8f2" stroke="#9aa0a6" />
              <path d="M10.500.500v5h5" fill="#fff" stroke="#9aa0a6" />
              <ellipse cx="4.500" cy="5" rx="2.500" ry="1.500" fill="#fff" />
              <path d="M1 15c1-4 4-6 7-5.500L11 11l-4 4z" fill="#56a63c" />
              <path d="M7 16l8-6v6z" fill="#fff" />
              <path d="M10 15.500h5.500V11" stroke="#9aa0a6" fill="none" />
            </svg>
            <Text $size={15.2} $color="#0969da" $ls={0.02} $drop={2}>Эмблема Git</Text>
          </BrokenImage>
          <H2>Инициализация репозитория</H2>
          <Para>Чтобы инициализировать новый репозиторий, необходимо выполнить в терминале команду:</Para>
        </Article>
      </FileBox>
    </Content>
  </Page>
);

/* ---------- taskbar ---------- */

const Taskbar = styled.footer`
  height: 40px;
  flex: none;
  display: flex;
  align-items: stretch;
  background: linear-gradient(#a8b9cb 0, #8da3bb 3px, #879eb8 100%);
  border-top: 1px solid #222c3a;
`;

const Quick = styled.div<{ $w: number }>`
  width: ${(p) => p.$w}px;
  display: grid;
  place-items: center;
`;

const Task = styled.div<{ $w: number; $active?: boolean; $gap?: number }>`
  width: ${(p) => p.$w}px;
  margin-right: ${(p) => p.$gap ?? 3}px;
  padding-left: 9px;
  display: flex;
  align-items: center;
  gap: 3px;
  border: 1px solid #3f4d60;
  border-top: 0;
  border-radius: 2px;
  box-shadow: inset 0 0 0 1px rgba(255, 255, 255, 0.45);
  background: ${(p) =>
    p.$active
      ? "linear-gradient(170deg, #d3dbe2 0, #bcc7d2 50%, #a9b8c7 60%, #b9c5d1 100%)"
      : "linear-gradient(170deg, #bac6d2 0, #a3b2c2 42%, #8fa1b5 50%, #91a5bb 100%)"};
`;

const TaskText = styled.span<{ $ml?: number }>`
  margin-left: ${(p) => p.$ml ?? 0}px;
  font-size: 11.7px;
  letter-spacing: -0.1px;
  color: #fff;
  white-space: pre;
  text-shadow: 0 0 2px rgba(40, 60, 80, 0.35);
`;

const Tray = styled.div`
  margin-left: auto;
  display: flex;
  align-items: center;
`;

const Clock = styled.div`
  width: 56px;
  margin: 0 11px 0 16px;
  display: flex;
  flex-direction: column;
  align-items: center;
  font-size: 11.4px;
  line-height: 17px;
  letter-spacing: -0.25px;
  color: #fff;
`;

const ShowDesktop = styled.div`
  width: 14px;
  align-self: stretch;
  border: 1px solid #b8c6d6;
  background: linear-gradient(#5b7084, #7d93aa 50%, #a9c3df);
`;

const ChromeIcon = () => (
  <svg width="31" height="31" viewBox="0 0 32 32">
    <path d="M16 16L2.140 8A16 16 0 0 1 29.860 8z" fill="#d93a2f" />
    <path d="M16 16L29.860 8A16 16 0 0 1 16 32z" fill="#fcc31e" />
    <path d="M16 16V32A16 16 0 0 1 2.140 8z" fill="#279847" />
    <path d="M16 8.500H29.860L22.500 19.700z" fill="#fcc31e" />
    <path d="M22.500 19.700L16 32 11 21z" fill="#279847" />
    <path d="M2.140 8L9.500 19.700 16 8.500z" fill="#d93a2f" />
    <path d="M2.140 8L9.500 19.700 16 23.500z" fill="#279847" />
    <circle cx="16" cy="16" r="7.500" fill="#fff" />
    <circle cx="16" cy="16" r="5.900" fill="#2c76e4" />
  </svg>
);

const TaskbarRow = () => (
  <Taskbar>
    <Quick $w={54}>
      <svg width="38" height="38" viewBox="0 0 38 38">
        <defs>
          <radialGradient id="orb" cx="50%" cy="85%" r="80%">
            <stop offset="0" stopColor="#6fdcf7" />
            <stop offset=".35" stopColor="#2276b4" />
            <stop offset=".8" stopColor="#174574" />
            <stop offset="1" stopColor="#7895b5" />
          </radialGradient>
        </defs>
        <circle cx="19" cy="19" r="17.500" fill="url(#orb)" stroke="#31506f" />
        <path d="M11 12c3-2 5.500-1.600 7.700 0l-1.600 6.700c-2.500-1.600-5-1.500-8 .2z" fill="#ee6a32" />
        <path d="M19.900 12.500c2.500 1.500 5 1.500 8-.4l-1.900 7c-2.500 1.600-5 1.600-7.700.2z" fill="#97c93d" />
        <path d="M8.700 20.300c2.800-1.700 5.500-1.600 7.900-.2l-1.700 6.700c-2.500-1.500-5-1.400-7.900.3z" fill="#45a3e5" />
        <path d="M17.900 20.700c2.500 1.500 5 1.500 7.800-.2l-1.700 6.600c-2.700 1.700-5.200 1.600-7.800.2z" fill="#fccb2c" />
      </svg>
    </Quick>
    <Quick $w={70}>
      <svg width="34" height="32" viewBox="0 0 34 32">
        <path d="M4 3h7l1 2h17v22H4z" fill="#e3c566" />
        <path d="M5 2h5v4H5z" fill="#3ca63b" />
        <path d="M11 4h6v4h-6z" fill="#f5f5f5" />
        <path d="M12 3h4v3h-4z" fill="#d0432e" />
        <path d="M20 5h9v4h-9z" fill="#eef5fb" />
        <path d="M22 6h3v2h-3z" fill="#3d86c6" />
        <path d="M2 8h27l3-1v21H2z" fill="#f6e29a" />
        <path d="M2 8h29v3H2z" fill="#fbf0bd" />
        <path d="M6 30V20q0-2 2-2h16q2 0 2 2v10h-5v-6H11v6z" fill="#9ed3ef" stroke="#6fb2dc" />
      </svg>
    </Quick>
    <Quick $w={54}>
      <svg width="28" height="28" viewBox="0 0 28 28">
        <path d="M8 3h18v21H8z" fill="#5da3d4" />
        <path d="M5 2h18v22H5z" fill="#8cc4e8" stroke="#5b9cc9" />
        <path d="M2 3h18v21H2z" fill="#b3daf1" stroke="#6fabd3" />
        <circle cx="11.500" cy="14" r="8.500" fill="#f07b22" stroke="#fbe1c8" />
        <path d="M9 9.500l7.500 4.500L9 18.500z" fill="#fff" />
      </svg>
    </Quick>
    <Quick $w={67}>
      <svg width="30" height="30" viewBox="0 0 30 30">
        <circle cx="15" cy="15" r="15" fill="#1c1b19" />
        <circle cx="15" cy="15" r="11.700" fill="#f6a51d" />
        <path
          d="M15 8.500L8.500 20h3.500M15 8.500L21.500 20H15.500l2-3h-4"
          fill="none"
          stroke="#1c1b19"
          strokeWidth="2.800"
          strokeLinejoin="round"
        />
      </svg>
    </Quick>
    <Task $w={160} $gap={2}>
      <svg width="32" height="32" viewBox="0 0 32 32">
        <circle cx="16" cy="16" r="15.500" fill="#63ad3f" />
        <path d="M8 9l3 12q1.500 4 5 3 3-1.500 2.200-5L16 8.500M18.500 20q1.500 3.500 4.500 2.500 3-1.300 2.200-4L22.500 8" fill="none" stroke="#fff" strokeWidth="4" />
        <path d="M10 18l3.500 13" stroke="#fff" strokeWidth="4" />
      </svg>
      <TaskText $ml={1}>µTorrent 3.5.5  (b...</TaskText>
    </Task>
    <Task $w={160}>
      <svg width="32" height="32" viewBox="0 0 32 32">
        <path d="M23 1l8 3.500v23L23 31z" fill="#22a5ee" />
        <path d="M23 1v8L5 23.500 1.500 21v-1.500z" fill="#1b75ba" />
        <path d="M23 31v-8L5 8.500 1.500 11v1.500z" fill="#1e8bd6" />
      </svg>
      <TaskText $ml={0.5}>Instruction.md - S...</TaskText>
    </Task>
    <Task $w={159} $gap={2}>
      <svg width="32" height="32" viewBox="0 0 32 32">
        <path d="M16 0l7.500 7.500L16 15 8.500 7.500z" fill="#ee7f7c" />
        <path d="M8 8.500l7.500 7.500L8 23.500.5 16z" fill="#76aaf0" />
        <path d="M24 8.500l7.500 7.500-7.500 7.500-7.500-7.500z" fill="#93cf79" />
        <path d="M16 17l7.500 7.500L16 32l-7.500-7.500z" fill="#f7de72" />
        <path d="M12 5l4 5v14M16 13l5 4" stroke="#65717c" strokeWidth="1.800" fill="none" />
        <circle cx="16" cy="11" r="2" fill="#65717c" />
        <circle cx="21" cy="17" r="2" fill="#65717c" />
        <circle cx="16" cy="23" r="2" fill="#65717c" />
      </svg>
      <TaskText>MINGW64:/c/Use...</TaskText>
    </Task>
    <Task $w={160} $gap={0}>
      <ChromeIcon />
      <TaskText $ml={2}>Реакции - Google...</TaskText>
    </Task>
    <Task $w={160} $active>
      <ChromeIcon />
      <TaskText $ml={1}>first_repository/In...</TaskText>
    </Task>
    <Tray>
      <Text $size={11.4} $color="#fff" $drop={-6}>RU</Text>
      <Text $ml={16}>
        <svg width="8" height="5" viewBox="0 0 8 5"><path d="M4 0l4 4.500H0z" fill="#fff" /></svg>
      </Text>
      <Text $ml={13}>
        <svg width="16" height="18" viewBox="0 0 16 18">
          <path d="M1.500 2.500h5.500v13H1.500z" fill="#8da3bb" stroke="#222" strokeWidth="2.600" />
          <path d="M1.500 2.500h5.500v13H1.500z" fill="none" stroke="#fff" strokeWidth="1.200" />
          <path d="M9 .500v4M13 .500v4M7.500 4.500h7.500v4q0 2.500-3 2.500v5H9" fill="none" stroke="#222" strokeWidth="2.600" />
          <path d="M9 .500v4M13 .500v4M11 10v6H8" fill="none" stroke="#fff" strokeWidth="1.300" />
          <path d="M7.500 4.500h7.500v3q0 2.800-3.700 2.800T7.500 7.500z" fill="#fff" />
          <path d="M1 8.500l7 7M8 8.500l-7 7" stroke="#c8141a" strokeWidth="2.800" />
        </svg>
      </Text>
      <Text $ml={9}>
        <svg width="16" height="14" viewBox="0 0 16 14" fill="#fff" stroke="#36434f" strokeWidth=".6">
          <path d="M.5 10.500h2.500V13H.5zM3.600 8.500h2.500V13H3.600zM6.700 6h2.500v7H6.700zM9.800 3.500h2.500V13H9.800zM12.900 1h2.500v12h-2.500z" />
        </svg>
      </Text>
      <Text $ml={8}>
        <svg width="17" height="16" viewBox="0 0 17 16">
          <path d="M.7 5.300h3L8 1.500v13l-4.300-4H.7z" fill="#fff" stroke="#36434f" strokeWidth=".8" />
          <path d="M9.800 5.500q1.500 2.500 0 5M11.800 3.500q3 4.500 0 9M13.800 2q3.500 6 0 12" fill="none" stroke="#fff" strokeWidth="1" />
        </svg>
      </Text>
      <Clock>
        <span>13:43</span>
        <span>30.08.2022</span>
      </Clock>
      <ShowDesktop />
    </Tray>
  </Taskbar>
);

/* Red pen marks drawn over the window */
const Marks = styled.svg`
  position: absolute;
  inset: 0;
  z-index: 5;
  pointer-events: none;
`;

export default function App() {
  return (
    <Screen>
      <Global />
      <TabStrip />
      <AddressBar />
      <Viewport>
        <GitHubPage />
        <Scrollbar>
          <ScrollArrow>
            <svg width="8" height="5" viewBox="0 0 8 5"><path d="M4 0l4 4.500H0z" fill="#8d8d8d" /></svg>
          </ScrollArrow>
          <Thumb />
          <ScrollArrow $down>
            <svg width="8" height="5" viewBox="0 0 8 5"><path d="M4 0l4 4.500H0z" fill="#505050" /></svg>
          </ScrollArrow>
        </Scrollbar>
      </Viewport>
      <TaskbarRow />
      <Marks width="1366" height="768" fill="none" stroke="#e41e26" strokeWidth="5">
        <ellipse cx="504.500" cy="53.500" rx="77" ry="14.500" />
        <ellipse cx="1177.500" cy="468" rx="35.500" ry="38.500" />
      </Marks>
    </Screen>
  );
}
